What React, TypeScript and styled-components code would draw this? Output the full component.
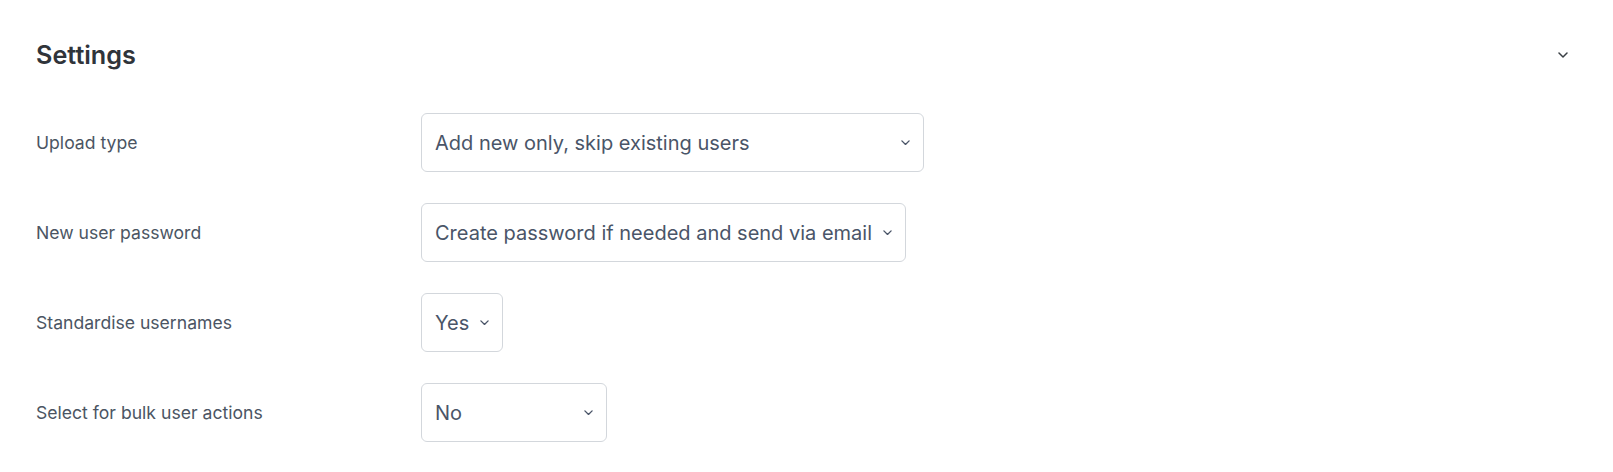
import React from "react";
import styled, { createGlobalStyle } from "styled-components";

const Global = createGlobalStyle`
  html, body { margin: 0; padding: 0; background: #ffffff; }
  body { font-family: Inter, "Noto Sans", "Liberation Sans", sans-serif; }
`;

const Page = styled.div`
  padding: 38px 45px 0 36px;
`;

const Header = styled.div`
  display: flex;
  align-items: center;
  justify-content: space-between;
  height: 34px;
  margin-bottom: 41px;
`;

const Title = styled.h3`
  margin: 0;
  font-size: 25.2px;
  font-weight: 600;
  color: #30343a;
  line-height: 34px;
`;

const Toggle = styled.span`
  display: flex;
  width: 10px;
  height: 10px;
  align-items: center;
  justify-content: center;
  color: #3a3f45;
`;

const Rows = styled.div`
  display: flex;
  flex-direction: column;
  gap: 31px;
`;

const Row = styled.div`
  display: grid;
  grid-template-columns: 385px auto;
  align-items: center;
`;

const Label = styled.label`
  font-size: 17.6px;
  color: #4b5563;
  line-height: 24px;
`;

const Select = styled.div<{ $w: number }>`
  box-sizing: border-box;
  width: ${(p) => p.$w}px;
  height: 59px;
  border: 1px solid #d3d7dc;
  border-radius: 6px;
  display: flex;
  align-items: center;
  justify-content: space-between;
  padding: 0 13px 0 13px;
  font-size: 20px;
  color: #4a5568;
  background: #fff;
`;

const Chevron = ({ size = 9 }: { size?: number }) => (
  <svg width={size} height={size * 0.6} viewBox="0 0 10 6" fill="none">
    <path d="M1 1l4 4 4-4" stroke="currentColor" strokeWidth="1.5" strokeLinecap="round" strokeLinejoin="round" />
  </svg>
);

const Caret = styled.span`
  display: flex;
  align-items: center;
  color: #4a5568;
  margin-left: 10px;
`;

const rows = [
  { label: "Upload type", value: "Add new only, skip existing users", w: 503 },
  { label: "New user password", value: "Create password if needed and send via email", w: 485 },
  { label: "Standardise usernames", value: "Yes", w: 82 },
  { label: "Select for bulk user actions", value: "No", w: 186 },
];

export default function App() {
  return (
    <>
      <Global />
      <Page>
        <Header>
          <Title>Settings</Title>
          <Toggle>
            <Chevron size={10} />
          </Toggle>
        </Header>
        <Rows>
          {rows.map((r) => (
            <Row key={r.label}>
              <Label>{r.label}</Label>
              <Select $w={r.w}>
                <span>{r.value}</span>
                <Caret>
                  <Chevron />
                </Caret>
              </Select>
            </Row>
          ))}
        </Rows>
      </Page>
    </>
  );
}
